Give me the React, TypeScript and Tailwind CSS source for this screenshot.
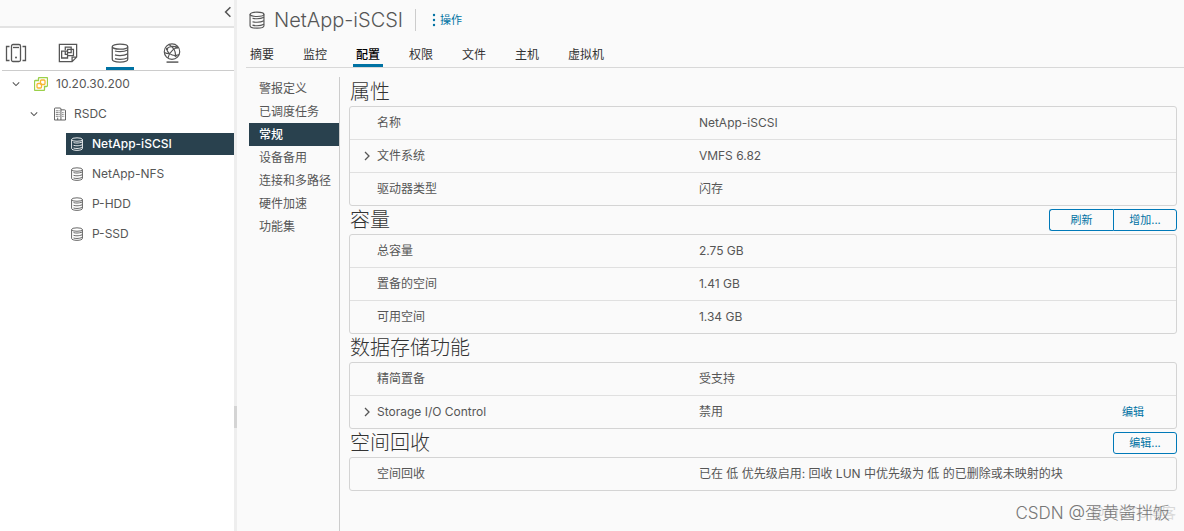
import { ReactNode } from "react";

type IconProps = { className?: string };

function StorageIcon({ className }: IconProps) {
  return (
    <svg viewBox="0 0 20 22" fill="none" stroke="currentColor" strokeWidth="1.4" className={className} aria-hidden="true">
      <ellipse cx="10" cy="4" rx="8.5" ry="2.7" />
      <path d="M1.5 4v14c0 1.700 3.800 3 8.500 3s8.500-1.300 8.500-3V4" />
      <path d="M4.500 8.800c1.600.5 3.500.7 5.500.7s6-.5 8.500-1.800M4.500 13.100c1.600.5 3.500.7 5.500.7s6-.5 8.500-1.800M4.500 17.300c1.600.5 3.500.7 5.500.7s6-.5 8.500-1.800" />
    </svg>
  );
}

function HostIcon({ className }: IconProps) {
  return (
    <svg viewBox="0 0 22 20" fill="none" stroke="currentColor" strokeWidth="1.3" className={className} aria-hidden="true">
      <path d="M4.500 3.500H1.500v14h3M17.500 3.500h3v14h-3" />
      <rect x="6.500" y="1.500" width="9" height="17" rx="1.500" />
      <path d="M8 4.500h6" />
      <circle cx="11" cy="14.500" r="1" fill="currentColor" stroke="none" />
    </svg>
  );
}

function VmIcon({ className }: IconProps) {
  return (
    <svg viewBox="0 0 22 22" fill="none" stroke="currentColor" strokeWidth="1.4" className={className} aria-hidden="true">
      <path d="M1.500 1.500h19v14l-5 5h-14zM20.500 15.500h-5v5" />
      <path d="M8 8V4.500h6.500V7" />
      <path d="M4 9h6.500v7.500H4z" />
      <path d="M10.500 14H17V7h-6.500v2" />
      <path d="M8 9v3.500h2.500M14.500 7v3.500h-4" />
    </svg>
  );
}

function NetworkIcon({ className }: IconProps) {
  return (
    <svg viewBox="0 0 20 22" fill="none" stroke="currentColor" strokeWidth="1.3" className={className} aria-hidden="true">
      <circle cx="10" cy="9.500" r="8.500" />
      <path d="M4 6.500c3-3 8-3.500 12.500-1.500M4 6.500c1 4 4.500 7 10 7.500M16 4.500c-5 2.500-9 6.500-10.500 12M7 2c5 3 7 7 7 12M1.500 10.500c2 1 3.500 1.300 5.500 1.300M14 14l3.500-1.300" />
      <path d="M4 21h13" strokeWidth="1.6" />
      <circle cx="4.500" cy="6.500" r="1.300" fill="currentColor" stroke="none" />
      <circle cx="15.500" cy="5" r="1.300" fill="currentColor" stroke="none" />
      <circle cx="14" cy="14" r="1.300" fill="currentColor" stroke="none" />
    </svg>
  );
}

function VcenterIcon({ className }: IconProps) {
  return (
    <svg viewBox="0 0 14 14" fill="none" className={className} aria-hidden="true">
      <path d="M4.500 3.500v-2q0-1 1-1h7q1 0 1 1v7q0 1-1 1h-2v3q0 1-1 1h-8q-1 0-1-1v-8q0-1 1-1z" stroke="#9bd04a" strokeWidth="1.3" />
      <rect x="6.500" y="3" width="4.500" height="4.500" rx="1" stroke="#f7b731" strokeWidth="1.3" />
      <rect x="3" y="6.500" width="4.500" height="4.500" rx="1" stroke="#f7b731" strokeWidth="1.3" />
    </svg>
  );
}

function DatacenterIcon({ className }: IconProps) {
  return (
    <svg viewBox="0 0 13 14" fill="none" stroke="currentColor" className={className} aria-hidden="true">
      <path d="M.5 13.500V1.500q0-1 1-1h5q1 0 1 1v12zM7.500 2.500h4q1 0 1 1v10h-5" />
      <path d="M2 3.500h4M2 5.500h4M2 7.500h4M2 9.500h4M9 5.500h2M9 7.500h2M9 9.500h2" strokeDasharray="1 .5" />
      <path d="M4 11v2.500" />
    </svg>
  );
}

function Angle({ className }: IconProps) {
  return (
    <svg viewBox="0 0 10 10" fill="none" stroke="currentColor" strokeWidth="1.3" className={className} aria-hidden="true">
      <path d="M3 1l4 4-4 4" />
    </svg>
  );
}

const inventoryTabs = [
  { label: "主机和集群", icon: <HostIcon className="h-5 w-[22px]" /> },
  { label: "虚拟机和模板", icon: <VmIcon className="h-5 w-5" /> },
  { label: "存储", icon: <StorageIcon className="h-5 w-5" />, active: true },
  { label: "网络", icon: <NetworkIcon className="h-5 w-5" /> },
];

const datastores = ["NetApp-iSCSI", "NetApp-NFS", "P-HDD", "P-SSD"];

const tabs = ["摘要", "监控", "配置", "权限", "文件", "主机", "虚拟机"];

const settings = ["警报定义", "已调度任务", "常规", "设备备用", "连接和多路径", "硬件加速", "功能集"];

type Row = { label: string; value: string; expandable?: boolean; editable?: boolean };

const properties: Row[] = [
  { label: "名称", value: "NetApp-iSCSI" },
  { label: "文件系统", value: "VMFS 6.82", expandable: true },
  { label: "驱动器类型", value: "闪存" },
];

const capacity: Row[] = [
  { label: "总容量", value: "2.75 GB" },
  { label: "置备的空间", value: "1.41 GB" },
  { label: "可用空间", value: "1.34 GB" },
];

const capabilities: Row[] = [
  { label: "精简置备", value: "受支持" },
  { label: "Storage I/O Control", value: "禁用", expandable: true, editable: true },
];

const reclamation: Row[] = [
  { label: "空间回收", value: "已在 低 优先级启用: 回收 LUN 中优先级为 低 的已删除或未映射的块" },
];

function Section({ title, rows, actions }: { title: string; rows: Row[]; actions?: ReactNode }) {
  return (
    <section>
      <div className="flex h-7 items-center justify-between">
        <h2 className="pl-px text-[20px] leading-7 font-light text-[#333333]">{title}</h2>
        {actions}
      </div>
      <div className="rounded-[3px] border border-[#d4d4d4]">
        <table className="w-full border-separate border-spacing-0 text-left">
          <tbody>
            {rows.map((row) => (
              <tr key={row.label} className="group">
                <th
                  scope="row"
                  className="h-[33px] w-[42%] border-b border-[#e0e0e0] font-normal group-last:h-8 group-last:border-b-0"
                >
                  <div className="flex items-center">
                    <span className="flex w-[27px] justify-center pl-1.5">
                      {row.expandable && (
                        <button aria-label={`展开 ${row.label}`}>
                          <Angle className="h-2.5 w-2.5" />
                        </button>
                      )}
                    </span>
                    {row.label}
                  </div>
                </th>
                <td className="h-[33px] border-b border-[#e0e0e0] pl-0.5 group-last:h-8 group-last:border-b-0">
                  <div className="flex items-center justify-between">
                    {row.value}
                    {row.editable && (
                      <a href="#" className="mr-8 text-[11px] text-[#0072a3]">
                        编辑
                      </a>
                    )}
                  </div>
                </td>
              </tr>
            ))}
          </tbody>
        </table>
      </div>
    </section>
  );
}

const buttonClass = "h-[22px] w-16 border border-[#0079b8] text-[11px] leading-5 text-[#0072a3]";

export default function App() {
  return (
    <div className="relative flex min-h-screen bg-[#fafafa] font-[Inter,'Noto_Sans_CJK_SC',sans-serif] text-[12px] leading-4 text-[#565656]">
      <aside className="flex w-[234px] shrink-0 flex-col bg-white">
        <div className="flex h-7 items-start justify-end border-b-2 border-[#e3e3e3] bg-[#fafafa] pt-1.5">
          <button aria-label="收起">
            <Angle className="h-3 w-3 rotate-180" />
          </button>
        </div>
        <nav className="ml-0.5 flex h-[43px] items-end gap-6 border-b border-[#cccccc]">
          {inventoryTabs.map((tab) => (
            <a
              key={tab.label}
              href="#"
              aria-label={tab.label}
              className={`flex h-8 w-7 justify-center border-b-3 pt-[5px] ${tab.active ? "border-[#0072a3]" : "border-transparent"}`}
            >
              {tab.icon}
            </a>
          ))}
        </nav>
        <ul className="flex flex-col gap-2 pt-0.5">
          <li className="flex h-[22px] items-center pl-3">
            <Angle className="mr-3.5 h-2 w-2 rotate-90" />
            <VcenterIcon className="mr-2 h-3.5 w-3.5" />
            10.20.30.200
          </li>
          <li className="flex h-[22px] items-center pl-[30px]">
            <Angle className="mr-4 h-2 w-2 rotate-90" />
            <DatacenterIcon className="mr-2 h-3.5 w-3" />
            RSDC
          </li>
          {datastores.map((name) => (
            <li key={name} className="pl-[66px]">
              <a
                href="#"
                className={`flex h-[22px] items-center gap-2 pl-1 ${name === "NetApp-iSCSI" ? "bg-[#29414e] font-medium text-white" : ""}`}
              >
                <StorageIcon className="h-3.5 w-3.5" />
                {name}
              </a>
            </li>
          ))}
        </ul>
      </aside>
      <div className="relative w-[3px] shrink-0 bg-[#eeeeee]">
        <div className="absolute top-[406px] right-0 h-[22px] w-[3px] bg-[#d4d4d4]" />
      </div>

      <main className="flex min-w-0 grow flex-col pl-[9px]">
        <header className="flex h-10 items-center pl-0.5">
          <StorageIcon className="mr-2 h-[18px] w-[18px]" />
          <h1 className="text-[20px] leading-6 font-light">NetApp-iSCSI</h1>
          <div className="mr-4 ml-3 h-[22px] w-px bg-[#cccccc]" />
          <button className="flex items-center gap-1 text-[11px] text-[#0072a3]">
            <svg viewBox="0 0 4 14" className="h-3.5 w-1" fill="currentColor" aria-hidden="true">
              <circle cx="2" cy="2" r="1.2" />
              <circle cx="2" cy="7" r="1.2" />
              <circle cx="2" cy="12" r="1.2" />
            </svg>
            操作
          </button>
        </header>
        <nav className="flex h-7 items-end gap-[23px] border-b border-[#d8d8d8] pl-px text-[#333333]">
          {tabs.map((tab) => (
            <a
              key={tab}
              href="#"
              className={`h-5 border-b-3 px-[3px] ${tab === "配置" ? "border-[#0072a3] font-medium text-black" : "border-transparent"}`}
            >
              {tab}
            </a>
          ))}
        </nav>
        <div className="flex grow">
          <nav className="mt-[9px] ml-[3px] flex w-[91px] shrink-0 flex-col border-r border-[#cccccc]">
            {settings.map((item) => (
              <a
                key={item}
                href="#"
                className={`h-[23px] pl-2.5 leading-[23px] ${item === "常规" ? "bg-[#29414e] font-medium text-white" : ""}`}
              >
                {item}
              </a>
            ))}
          </nav>
          <div className="min-w-0 grow pt-2.5 pr-[7px] pl-[9px]">
            <Section title="属性" rows={properties} />
            <Section
              title="容量"
              rows={capacity}
              actions={
                <div className="flex">
                  <button className={`${buttonClass} rounded-l-[3px] border-r-0`}>刷新</button>
                  <button className={`${buttonClass} rounded-r-[3px]`}>增加...</button>
                </div>
              }
            />
            <Section title="数据存储功能" rows={capabilities} />
            <Section
              title="空间回收"
              rows={reclamation}
              actions={<button className={`${buttonClass} rounded-[3px]`}>编辑...</button>}
            />
          </div>
        </div>
      </main>

      <div className="pointer-events-none absolute right-2 bottom-1.5 text-[14px] leading-6 text-[#d8d8d8]">@51CTO博客</div>
      <div className="pointer-events-none absolute right-3.5 bottom-1.5 text-[17px] leading-6 font-light text-[#777777]">
        CSDN @蛋黄酱拌饭
      </div>
    </div>
  );
}
